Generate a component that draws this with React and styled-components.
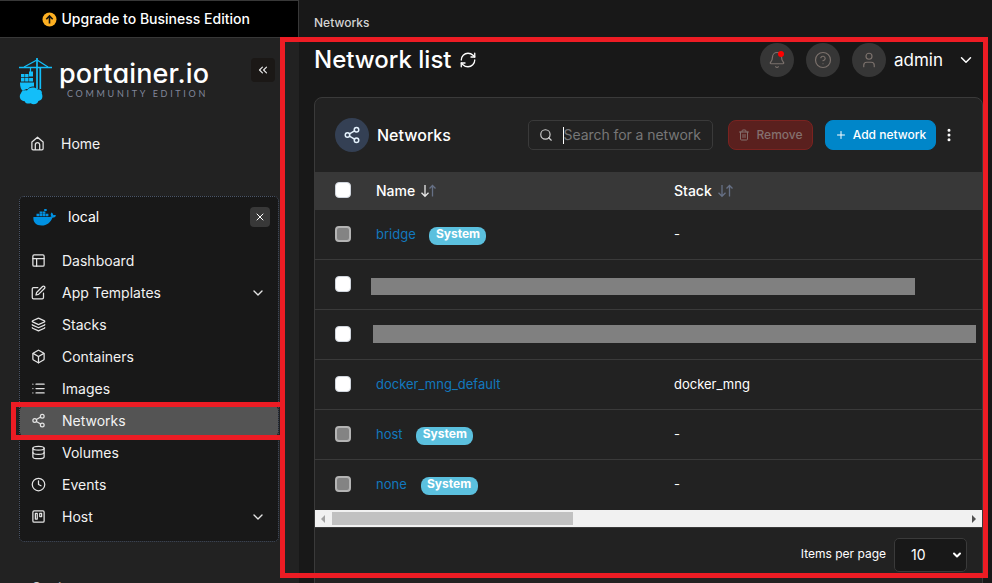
import styled, { createGlobalStyle, css } from "styled-components";
import {
  Bell,
  Box,
  ChevronDown,
  ChevronsLeft,
  CircleHelp,
  Clock,
  Database,
  Layers,
  List,
  MoreVertical,
  PanelsTopLeft,
  Plus,
  RefreshCw,
  Search,
  Share2,
  Trash2,
  Trello,
  User,
  X
} from "lucide-react";
import { FiEdit } from "react-icons/fi";

const GlobalStyle = createGlobalStyle`
  * {
    box-sizing: border-box;
  }
  body {
    margin: 0;
    background: #181818;
    color: #fff;
    font-family: Inter, "Liberation Sans", sans-serif;
    font-size: 14px;
  }
  svg {
    display: block;
    flex-shrink: 0;
  }
`;

const Page = styled.div`
  position: relative;
  width: 992px;
  height: 583px;
  overflow: hidden;
  display: flex;
`;

/* ---------- sidebar ---------- */
const Sidebar = styled.aside`
  flex: 0 0 299px;
  height: 583px;
  background: #222;
  overflow: hidden;
`;
const Upgrade = styled.div`
  height: 38px;
  display: flex;
  align-items: center;
  gap: 5px;
  padding-left: 41.5px;
  background: #000;
  border: 1px solid #383838;
  border-left: 0;
  font-weight: 500;
  font-size: 14px;
  .label {
    padding-bottom: 2px;
  }
`;
const LogoRow = styled.div`
  display: flex;
  align-items: flex-start;
  height: 90px;
  padding: 20px 24px 0 18px;
`;
const LogoText = styled.div`
  margin-left: 6px;
  width: 152px;
  white-space: nowrap;
  .name {
    font-size: 27px;
    line-height: 31px;
    font-weight: 500;
    font-feature-settings: "cv11", "ss03";
    letter-spacing: 0.15px;
  }
  .edition {
    padding-left: 8px;
    font-size: 9px;
    line-height: 10px;
    letter-spacing: 2.7px;
    color: #81879b;
    font-family: Lato, sans-serif;
  }
`;
const Collapse = styled.button`
  width: 24px;
  height: 24px;
  margin-left: auto;
  padding: 0;
  display: grid;
  place-items: center;
  border: 0;
  border-radius: 4px;
  background: #1b1816;
  color: #e8e8e8;
`;
const NavItem = styled.div`
  height: 32px;
  display: flex;
  align-items: center;
  padding: 0 12px 0 11px;
  border-radius: 5px;
  color: #f2f2f2;
  background: ${({ $active }) => ($active ? "#545454" : "transparent")};
  svg {
    margin-bottom: 1px;
    color: #e4e4e4;
  }
  .label {
    flex: 1;
    margin-left: 16px;
    padding-bottom: 2px;
  }
`;
const HomeLink = styled(NavItem)`
  margin: 0 0 36px 19px;
`;
const Environment = styled.section`
  width: 260px;
  height: 346px;
  margin-left: 19px;
  border: 1px dotted #4a5568;
  border-radius: 5px;
  background: #181818;
`;
const EnvHead = styled.div`
  height: 40px;
  margin-bottom: 8px;
  padding: 0 8px 0 13px;
  display: flex;
  align-items: center;
  .name {
    flex: 1;
    margin-left: 12px;
    padding-bottom: 2px;
  }
`;
const CloseButton = styled.button`
  width: 20px;
  height: 20px;
  padding: 0;
  display: grid;
  place-items: center;
  border: 0;
  border-radius: 4px;
  background: #383838;
  color: #fff;
`;
const SectionTitle = styled.div`
  margin: 37px 0 0 32px;
  font-size: 14px;
  line-height: 18px;
  color: #ccc;
`;

/* ---------- content ---------- */
const Content = styled.main`
  flex: 1;
  height: 583px;
  padding-left: 15px;
  overflow: hidden;
`;
const Breadcrumb = styled.div`
  height: 37px;
  padding-top: 8px;
  line-height: 29px;
  font-size: 12px;
  font-weight: 500;
  color: #d4d4d4;
`;
const TitleBar = styled.header`
  height: 46px;
  display: flex;
  align-items: center;
  h1 {
    margin: 0 8px 0 0;
    padding-bottom: 2px;
    font-size: 24px;
    font-weight: 500;
  }
`;
const UserMenu = styled.div`
  display: flex;
  align-items: center;
  margin-left: auto;
  padding-right: 17px;
  .user {
    width: 56px;
    margin: 0 7px 0 8px;
    font-size: 17px;
  }
`;
const RoundIcon = styled.div`
  position: relative;
  width: 34px;
  height: 34px;
  display: grid;
  place-items: center;
  margin-left: ${({ $first }) => ($first ? 0 : "12px")};
  border-radius: 50%;
  background: #363636;
  color: #7b716c;
`;
const AlertDot = styled.span`
  position: absolute;
  top: 8px;
  left: 18px;
  width: 6px;
  height: 6px;
  border-radius: 50%;
  background: #f00;
`;
const Card = styled.section`
  width: 669px;
  height: 520px;
  margin-top: 14px;
  border: 1px solid #3a3a3a;
  border-radius: 8px;
  background: #222;
`;
const Toolbar = styled.div`
  height: 74px;
  display: flex;
  align-items: center;
  padding-left: 20px;
  h2 {
    width: 151px;
    margin: 0 0 0 8px;
    font-size: 16px;
    font-weight: 500;
  }
`;
const TitleIcon = styled.div`
  width: 34px;
  height: 34px;
  display: grid;
  place-items: center;
  border-radius: 50%;
  background: #344054;
  color: #e4f2fd;
`;
const SearchBox = styled.div`
  width: 185px;
  height: 30px;
  display: flex;
  align-items: center;
  padding-left: 10px;
  border: 1px solid #3a3a3a;
  border-radius: 5px;
  color: #d0d0d0;
  .caret {
    width: 1px;
    height: 17px;
    margin-left: 10px;
    background: #fff;
  }
  .placeholder {
    margin-left: -0.5px;
    padding-bottom: 1px;
    letter-spacing: -0.06px;
    color: #777;
    white-space: nowrap;
  }
`;
const Button = styled.button`
  height: 30px;
  display: flex;
  align-items: center;
  justify-content: center;
  gap: 6px;
  padding: 0;
  border-radius: 8px;
  font-family: inherit;
  font-size: 12px;
  font-weight: 500;
  .label {
    padding-bottom: 2px;
  }
  ${({ $danger }) =>
    $danger
      ? css`
          width: 85px;
          margin: 0 12px 0 15px;
          border: 1px solid #7a2320;
          background: #5a201e;
          color: #84706e;
        `
      : css`
          width: 111px;
          margin-right: 5px;
          border: 1px solid #0086c9;
          background: #0086c9;
          color: #fff;
        `}
`;
const Row = styled.div`
  height: 50px;
  display: grid;
  grid-template-columns: 61px 298px 1fr;
  align-items: center;
  border-bottom: 1px solid ${({ $last }) => ($last ? "#222" : "#3a3a3a")};
  font-size: 13px;
`;
const HeadRow = styled(Row)`
  height: 38px;
  padding-bottom: 2px;
  border: 0;
  background: #383838;
  font-size: 14px;
  font-weight: 500;
`;
const HeadCell = styled.div`
  display: flex;
  align-items: center;
  gap: 5px;
  svg {
    margin-top: 1px;
  }
`;
const Checkbox = styled.span`
  display: block;
  width: 16px;
  height: 16px;
  margin: 0 0 1px 20px;
  border: ${({ $disabled }) => ($disabled ? "2px solid #b4b4b4" : "1px solid #d0d5dd")};
  border-radius: 4px;
  background: ${({ $disabled }) => ($disabled ? "#838383" : "#fff")};
`;
const NameCell = styled.div`
  display: flex;
  align-items: center;
  color: #1278be;
  .name {
    padding-bottom: 2px;
  }
`;
const StackCell = styled.div`
  padding-bottom: 2px;
`;
const Badge = styled.span`
  width: 57px;
  height: 18px;
  margin: 3px 0 0 13.75px;
  border-radius: 8px;
  background: #5bc0de;
  color: #fff;
  font-size: 12px;
  line-height: 14px;
  font-weight: 700;
  text-align: center;
`;
const Redacted = styled.div`
  grid-column: 2 / 4;
  width: ${({ $width }) => $width}px;
  height: ${({ $height }) => $height}px;
  margin: ${({ $margin }) => $margin};
  background: #808080;
`;
const Scrollbar = styled.div`
  height: 17px;
  display: flex;
  align-items: center;
  padding: 0 6px;
  background: #f1f1f1;
  .thumb {
    width: 241px;
    height: 13px;
    margin: 0 auto 0 7px;
    background: #c1c1c1;
  }
`;
const Arrow = styled.span`
  border: 4px solid transparent;
  border-width: 4px 0;
  ${({ $right }) => ($right ? "border-left: 4px solid #505050;" : "border-right: 4px solid #a3a3a3;")}
`;
const Footer = styled.div`
  height: 56px;
  display: flex;
  align-items: center;
  justify-content: flex-end;
  padding: 0 15px 2px 0;
  border-top: 1px solid #3a3a3a;
  font-size: 12px;
  .label {
    padding-bottom: 2px;
  }
`;
const PageSize = styled.div`
  width: 73px;
  height: 34px;
  display: flex;
  align-items: center;
  justify-content: space-between;
  margin: 0 0 0 8px;
  padding: 0 3px 0 16px;
  border: 1px solid #3a3a3a;
  border-radius: 5px;
  background: #181818;
  font-size: 14px;
`;

/* red frames drawn over the page */
const Frame = styled.div`
  position: absolute;
  left: ${({ $x }) => $x}px;
  top: ${({ $y }) => $y}px;
  width: ${({ $w }) => $w}px;
  height: ${({ $h }) => $h}px;
  border: 5px solid #ed1c24;
`;

const CraneLogo = () => (
  <svg width="35" height="48" viewBox="0 0 35 48" fill="none">
    <path d="M1 9.5H34" stroke="#13bef9" strokeWidth="1.6" />
    <path d="M6 9L19 2L30 9M12.5 10V15" stroke="#13bef9" strokeWidth="1.2" />
    <path d="M19 0V31M22.3 9V31" stroke="#13bef9" strokeWidth="1.7" />
    <path
      d="M11 13.5h4v5h-4zM3 16h3.5v3.3H3zM7.1 16h3.4v3.3H7.1zM3 20h3.5v3.5H3zM7.1 20h3.4v3.5H7.1zM11.1 20H15v3.5h-3.9z"
      fill="#13bef9"
    />
    <path d="M2 24.5H16V28.5c-3-.5-5 .8-6 2.5-2 0-3.5.5-5 2-2-1.5-3-4-3-8.5Z" fill="#13bef9" />
    <path
      d="M9 32.5C10.5 29 17 28.5 19.5 31.500C22.500 31 24.500 33.300 23.800 35.500C25.200 38.500 24.400 42.500 20.400 42.900C19.400 46.200 15.400 47.100 12.700 45.300C9.200 46.200 7.200 45.100 6.700 43.300C2 43.200 .5 38 3 35.300C3.500 32.800 6 31.500 9 32.5Z"
      fill="#13bef9"
    />
  </svg>
);

const DockerIcon = () => (
  <svg width="23" height="17" viewBox="0 0 23 17" fill="#0091e2">
    <path d="M3.5 4.8h2.7v2.5H3.5zM6.6 2.4h2.7v2.1H6.6zM6.6 4.8h2.7v2.5H6.6zM9.7 2.4h2.7v2.1H9.7zM9.7 4.8h2.7v2.5H9.7zM11.2 0h2.5v2.1h-2.5zM12.8 4.8h2.6v2.5h-2.6z" />
    <path d="M.4 8H16.2c.9 0 1.7-.2 2.2-.5-1-1.3-1-2.7.1-4 1.2.8 1.7 1.600 1.800 2.700 1-.2 2-.1 2.700.3-.6 1.500-1.900 2.200-3.600 2.200C17.500 13.500 14 16.500 8.700 16.500 3 16.500 0 13.500.4 8Z" />
  </svg>
);

const HomeIcon = () => (
  <svg width="15" height="15" viewBox="0 0 24 24" fill="none" stroke="currentColor" strokeWidth="2" strokeLinejoin="round">
    <path d="M8.5 21V14a3.5 3.5 0 0 1 7 0v7M3 9.5L12 2l9 7.5V20a2 2 0 0 1-2 2H5a2 2 0 0 1-2-2Z" />
  </svg>
);

const UpgradeIcon = () => (
  <svg width="15" height="15" viewBox="0 0 15 15">
    <circle cx="7.5" cy="7.5" r="7" fill="#fdb022" />
    <path d="M7.5 11.5V4M4.3 7.2L7.5 4l3.2 3.2" fill="none" stroke="#111" strokeWidth="1.6" />
  </svg>
);

const SortIcon = ({ active }) => (
  <svg width="17" height="14" viewBox="0 0 17 14" fill="none" strokeWidth="1.3">
    <path d="M5 1v11M1.5 8.8L5 12.3l3.5-3.5" stroke={active ? "#e8e8e8" : "#667085"} />
    <path d="M12.5 12.5V1.5M9.5 4.5l3-3 3 3" stroke="#667085" />
  </svg>
);

const navItems = [
  { label: "Dashboard", icon: PanelsTopLeft },
  { label: "App Templates", icon: FiEdit, expandable: true },
  { label: "Stacks", icon: Layers },
  { label: "Containers", icon: Box },
  { label: "Images", icon: List },
  { label: "Networks", icon: Share2, active: true },
  { label: "Volumes", icon: Database },
  { label: "Events", icon: Clock },
  { label: "Host", icon: Trello, expandable: true }
];

const networks = [
  { name: "bridge", system: true, stack: "-" },
  { redacted: { $width: 544, $height: 17, $margin: "4px 0 0 -5px" } },
  { redacted: { $width: 603, $height: 18, $margin: "0 0 1px -3px" } },
  { name: "docker_mng_default", stack: "docker_mng" },
  { name: "host", system: true, stack: "-" },
  { name: "none", system: true, stack: "-" }
];

function SideMenu() {
  return (
    <Sidebar>
      <Upgrade>
        <UpgradeIcon />
        <span className="label">Upgrade to Business Edition</span>
      </Upgrade>
      <LogoRow>
        <CraneLogo />
        <LogoText>
          <div className="name">portainer.io</div>
          <div className="edition">COMMUNITY EDITION</div>
        </LogoText>
        <Collapse>
          <ChevronsLeft size={14} />
        </Collapse>
      </LogoRow>
      <HomeLink>
        <HomeIcon />
        <span className="label">Home</span>
      </HomeLink>
      <Environment>
        <EnvHead>
          <DockerIcon />
          <span className="name">local</span>
          <CloseButton>
            <X size={12} />
          </CloseButton>
        </EnvHead>
        {navItems.map(({ label, icon: Icon, active, expandable }) => (
          <NavItem key={label} $active={active}>
            <Icon size={15} />
            <span className="label">{label}</span>
            {expandable && <ChevronDown size={16} />}
          </NavItem>
        ))}
      </Environment>
      <SectionTitle>Settings</SectionTitle>
    </Sidebar>
  );
}

function NetworkTable() {
  return (
    <>
      <HeadRow>
        <Checkbox />
        <HeadCell>
          Name <SortIcon active />
        </HeadCell>
        <HeadCell>
          Stack <SortIcon />
        </HeadCell>
      </HeadRow>
      {networks.map(({ name, system, stack, redacted }, idx) => (
        <Row key={idx} $last={idx === networks.length - 1}>
          <Checkbox $disabled={system} />
          {redacted ? (
            <Redacted {...redacted} />
          ) : (
            <>
              <NameCell>
                <span className="name">{name}</span>
                {system && <Badge>System</Badge>}
              </NameCell>
              <StackCell>{stack}</StackCell>
            </>
          )}
        </Row>
      ))}
      <Scrollbar>
        <Arrow />
        <div className="thumb" />
        <Arrow $right />
      </Scrollbar>
    </>
  );
}

export default function App() {
  return (
    <Page>
      <GlobalStyle />
      <SideMenu />
      <Content>
        <Breadcrumb>Networks</Breadcrumb>
        <TitleBar>
          <h1>Network list</h1>
          <RefreshCw size={18} strokeWidth={1.75} />
          <UserMenu>
            <RoundIcon $first>
              <Bell size={18} strokeWidth={1.6} />
              <AlertDot />
            </RoundIcon>
            <RoundIcon>
              <CircleHelp size={18} strokeWidth={1.6} />
            </RoundIcon>
            <RoundIcon>
              <User size={18} strokeWidth={1.6} />
            </RoundIcon>
            <span className="user">admin</span>
            <ChevronDown size={18} />
          </UserMenu>
        </TitleBar>
        <Card>
          <Toolbar>
            <TitleIcon>
              <Share2 size={18} />
            </TitleIcon>
            <h2>Networks</h2>
            <SearchBox>
              <Search size={14} />
              <span className="caret" />
              <span className="placeholder">Search for a network</span>
            </SearchBox>
            <Button $danger>
              <Trash2 size={12} />
              <span className="label">Remove</span>
            </Button>
            <Button>
              <Plus size={12} />
              <span className="label">Add network</span>
            </Button>
            <MoreVertical size={16} strokeWidth={2.5} />
          </Toolbar>
          <NetworkTable />
          <Footer>
            <span className="label">Items per page</span>
            <PageSize>
              10
              <ChevronDown size={12} strokeWidth={4} />
            </PageSize>
          </Footer>
        </Card>
      </Content>
      <Frame $x={280} $y={37} $w={708} $h={541} />
      <Frame $x={11} $y={402} $w={274} $h={38} />
    </Page>
  );
}
